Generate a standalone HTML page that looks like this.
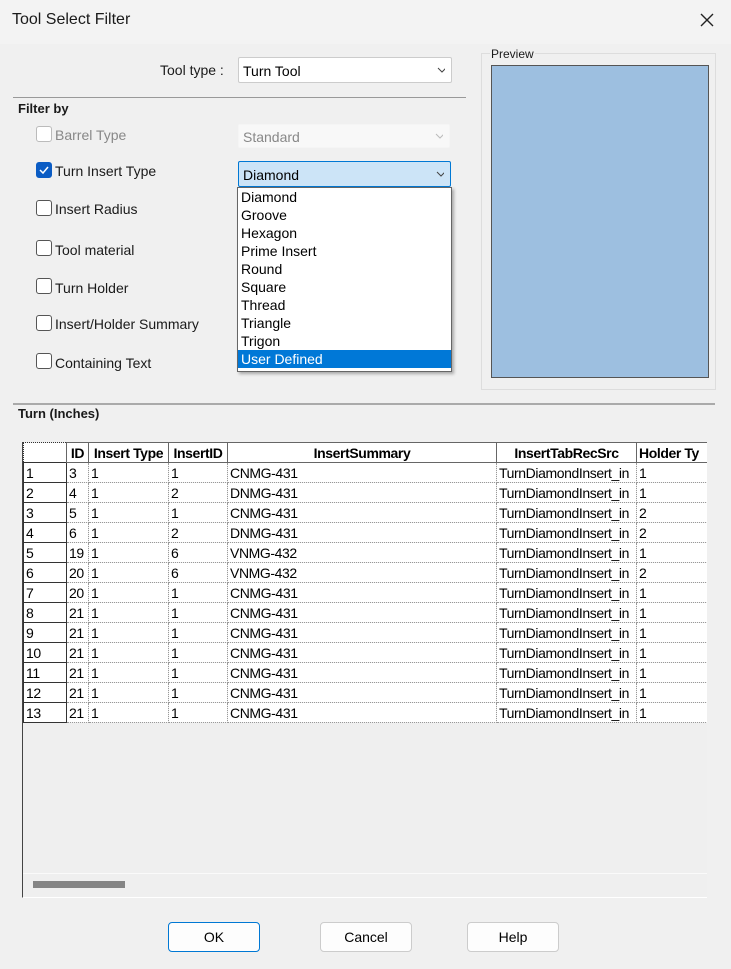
<!DOCTYPE html><html><head><style>
body{margin:0;width:731px;height:969px;background:#f0f0f0;font-family:"Liberation Sans",sans-serif;position:relative;overflow:hidden}
.a{position:absolute}
.t{font-size:14px;color:#1a1a1a}
.cb{position:absolute;width:14px;height:14px;border:1px solid #555;border-radius:3px;background:#fff}
.combo{position:absolute;background:#fff;border:1px solid #ccc;border-radius:2px;font-size:14px;box-sizing:border-box;padding:5px 4px}
.chev{position:absolute;right:6px;top:4px;width:8px;height:8px}
table{border-collapse:collapse;font-family:"Liberation Sans",sans-serif;font-size:14px;letter-spacing:-0.4px}
td{height:19px;border:1px dotted #999;padding:0 2px;background:#fff;white-space:nowrap;overflow:hidden}
tr.h td{font-weight:bold;text-align:center;border:1px solid #666}
td.rh{border:1px solid #333;background:#fff}
.btn{position:absolute;width:92px;height:30px;box-sizing:border-box;border:1px solid #ccc;border-radius:4px;background:#fdfdfd;font-size:14px;text-align:center;line-height:28px}
</style></head><body>
<div class="a" style="left:0;top:0;width:731px;height:44px;background:#f3f3f3"></div>
<div class="a t" style="left:12px;top:11px;font-size:16px">Tool Select Filter</div>
<svg class="a" style="left:700px;top:13px" width="14" height="14"><path d="M1 1L13 13M13 1L1 13" stroke="#222" stroke-width="1.4"/></svg>

<div class="a t" style="left:160px;top:62px">Tool type :</div>
<div class="combo" style="left:238px;top:57px;width:214px;height:26px">Turn Tool<svg class="chev" style="top:8px" width="10" height="8"><path d="M1 2L5 6L9 2" stroke="#444" fill="none"/></svg></div>
<div class="a" style="left:13px;top:97px;width:453px;height:1px;background:#999"></div>
<div class="a t" style="left:18px;top:101px;font-weight:bold;font-size:13px">Filter by</div>

<div class="cb" style="left:36px;top:126px;border-color:#bbb"></div><div class="a t" style="left:55px;top:127px;color:#888">Barrel Type</div>
<div class="combo" style="left:238px;top:124px;width:212px;height:24px;border-color:#f5f5f5;background:#f8f8f8;color:#888;padding-top:4px">Standard<svg class="chev" style="top:7px" width="10" height="8"><path d="M1 2L5 6L9 2" stroke="#bbb" fill="none"/></svg></div>

<div class="cb" style="left:36px;top:162px;background:#0b5cc4;border-color:#0b5cc4"><svg width="14" height="14" style="position:absolute;left:0;top:0"><path d="M3 7L6 10L11 4" stroke="#fff" stroke-width="1.5" fill="none"/></svg></div>
<div class="a t" style="left:55px;top:163px">Turn Insert Type</div>
<div class="combo" style="left:238px;top:161px;width:213px;height:26px;background:#cce4f7;border-color:#0078d4;padding-top:5px">Diamond<svg class="chev" style="top:8px" width="10" height="8"><path d="M1 2L5 6L9 2" stroke="#444" fill="none"/></svg></div>

<div class="cb" style="left:36px;top:200px"></div><div class="a t" style="left:55px;top:201px">Insert Radius</div>
<div class="cb" style="left:36px;top:240px"></div><div class="a t" style="left:55px;top:242px">Tool material</div>
<div class="cb" style="left:36px;top:278px"></div><div class="a t" style="left:55px;top:280px">Turn Holder</div>
<div class="cb" style="left:36px;top:315px"></div><div class="a t" style="left:55px;top:316px">Insert/Holder Summary</div>
<div class="cb" style="left:36px;top:353px"></div><div class="a t" style="left:55px;top:355px">Containing Text</div>

<div class="a" style="left:237px;top:187px;width:213px;height:183px;background:#fff;border:1px solid #666;box-shadow:2px 2px 3px rgba(0,0,0,.3);font-size:14px;line-height:18px">
<div style="padding-left:3px">Diamond</div><div style="padding-left:3px">Groove</div><div style="padding-left:3px">Hexagon</div><div style="padding-left:3px">Prime Insert</div><div style="padding-left:3px">Round</div><div style="padding-left:3px">Square</div><div style="padding-left:3px">Thread</div><div style="padding-left:3px">Triangle</div><div style="padding-left:3px">Trigon</div><div style="padding-left:3px;background:#0078d7;color:#fff">User Defined</div></div>

<div class="a" style="left:481px;top:53px;width:233px;height:335px;border:1px solid #ddd"></div>
<div class="a t" style="left:490px;top:47px;font-size:12px;background:#f0f0f0;padding:0 1px">Preview</div>
<div class="a" style="left:491px;top:65px;width:216px;height:311px;background:#9dbfe0;border:1px solid #555"></div>

<div class="a" style="left:13px;top:403px;width:702px;height:2px;background:#aaa"></div>
<div class="a t" style="left:18px;top:406px;font-weight:bold;font-size:13px">Turn (Inches)</div>

<div class="a" style="left:22px;top:442px;width:684px;height:455px;background:#efefef;border-left:1px solid #444;border-bottom:1px solid #fff;overflow:hidden">
<table style="width:686px;table-layout:fixed">
<col style="width:43px"><col style="width:22px"><col style="width:80px"><col style="width:59px"><col style="width:269px"><col style="width:140px"><col style="width:73px">
<tr class="h"><td style="border:1px dotted #333;background:#fff"></td><td>ID</td><td>Insert Type</td><td>InsertID</td><td>InsertSummary</td><td>InsertTabRecSrc</td><td style="text-align:left">Holder Ty</td></tr>
<tr><td class="rh">1</td><td>3</td><td>1</td><td>1</td><td>CNMG-431</td><td>TurnDiamondInsert_in</td><td>1</td></tr>
<tr><td class="rh">2</td><td>4</td><td>1</td><td>2</td><td>DNMG-431</td><td>TurnDiamondInsert_in</td><td>1</td></tr>
<tr><td class="rh">3</td><td>5</td><td>1</td><td>1</td><td>CNMG-431</td><td>TurnDiamondInsert_in</td><td>2</td></tr>
<tr><td class="rh">4</td><td>6</td><td>1</td><td>2</td><td>DNMG-431</td><td>TurnDiamondInsert_in</td><td>2</td></tr>
<tr><td class="rh">5</td><td>19</td><td>1</td><td>6</td><td>VNMG-432</td><td>TurnDiamondInsert_in</td><td>1</td></tr>
<tr><td class="rh">6</td><td>20</td><td>1</td><td>6</td><td>VNMG-432</td><td>TurnDiamondInsert_in</td><td>2</td></tr>
<tr><td class="rh">7</td><td>20</td><td>1</td><td>1</td><td>CNMG-431</td><td>TurnDiamondInsert_in</td><td>1</td></tr>
<tr><td class="rh">8</td><td>21</td><td>1</td><td>1</td><td>CNMG-431</td><td>TurnDiamondInsert_in</td><td>1</td></tr>
<tr><td class="rh">9</td><td>21</td><td>1</td><td>1</td><td>CNMG-431</td><td>TurnDiamondInsert_in</td><td>1</td></tr>
<tr><td class="rh">10</td><td>21</td><td>1</td><td>1</td><td>CNMG-431</td><td>TurnDiamondInsert_in</td><td>1</td></tr>
<tr><td class="rh">11</td><td>21</td><td>1</td><td>1</td><td>CNMG-431</td><td>TurnDiamondInsert_in</td><td>1</td></tr>
<tr><td class="rh">12</td><td>21</td><td>1</td><td>1</td><td>CNMG-431</td><td>TurnDiamondInsert_in</td><td>1</td></tr>
<tr><td class="rh">13</td><td>21</td><td>1</td><td>1</td><td>CNMG-431</td><td>TurnDiamondInsert_in</td><td>1</td></tr>
</table>
<div class="a" style="left:0;top:431px;width:684px;height:1px;background:#fafafa"></div>
<div class="a" style="left:10px;top:439px;width:92px;height:7px;background:#858585"></div>
</div>

<div class="btn" style="left:168px;top:922px;border:1px solid #0078d4;border-radius:4px">OK</div>
<div class="btn" style="left:320px;top:922px">Cancel</div>
<div class="btn" style="left:467px;top:922px">Help</div>
</body></html>
